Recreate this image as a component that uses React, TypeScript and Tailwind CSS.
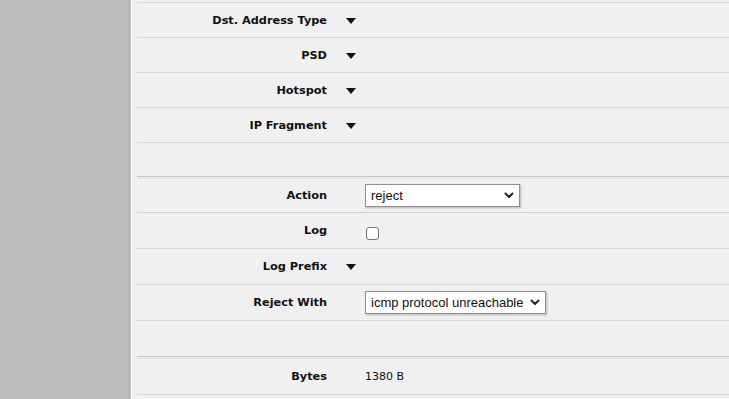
import React from "react";

const Tri = () => (
  <svg width="10" height="6" viewBox="0 0 10 6" className="block">
    <polygon points="0,0 10,0 5,6" fill="#111" />
  </svg>
);

const Chevron = () => (
  <svg width="10" height="7" viewBox="0 0 10 7" className="block">
    <polyline points="1.5,1.5 5,5 8.5,1.5" fill="none" stroke="#222" strokeWidth="2" strokeLinecap="round" strokeLinejoin="round" />
  </svg>
);

const Select = ({ value, w }: { value: string; w: string }) => (
  <div
    className={`flex items-center justify-between gap-[6px] h-[23px] ${w} bg-white border border-[#8f8f8f] shadow-[1px_1px_2px_rgba(0,0,0,0.25)] pl-[5px] pr-[5px] text-[13px] text-[#111]`}
    style={{ fontFamily: "'Liberation Sans', Arial, sans-serif" }}
  >
    <span className="whitespace-nowrap">{value}</span>
    <Chevron />
  </div>
);

type Row = {
  label?: string;
  kind: "tri" | "select" | "check" | "text" | "empty";
  value?: string;
  w?: string;
  cls: string;
};

const rows: Row[] = [
  { label: "Dst. Address Type", kind: "tri", cls: "h-[35px] border-b border-[#d9d9d9]" },
  { label: "PSD", kind: "tri", cls: "h-[35px] border-b border-[#d9d9d9]" },
  { label: "Hotspot", kind: "tri", cls: "h-[35px] border-b border-[#d9d9d9]" },
  { label: "IP Fragment", kind: "tri", cls: "h-[35px] border-b border-[#d9d9d9]" },
  { kind: "empty", cls: "h-[34px] border-b border-[#c4c4c4]" },
  { label: "Action", kind: "select", value: "reject", w: "w-[155px]", cls: "mt-[1px] h-[35px] border-t border-t-[#e2e2e2] border-b border-b-[#d2d2d2]" },
  { label: "Log", kind: "check", cls: "h-[36px] border-b border-[#d9d9d9]" },
  { label: "Log Prefix", kind: "tri", cls: "h-[36px] border-b border-[#d9d9d9]" },
  { label: "Reject With", kind: "select", value: "icmp protocol unreachable", w: "w-[181px]", cls: "h-[36px] border-b border-[#d9d9d9]" },
  { kind: "empty", cls: "h-[36px] border-b border-[#c4c4c4]" },
  { label: "Bytes", kind: "text", value: "1380 B", cls: "mt-[1px] h-[37px] border-t border-t-[#e2e2e2] border-b border-b-[#d9d9d9]" },
];

export default function App() {
  return (
    <div
      className="flex w-[729px] h-[399px] overflow-hidden bg-[#f0f0f0]"
      style={{ fontFamily: "'DejaVu Sans', Verdana, sans-serif" }}
    >
      <div className="w-[128px] shrink-0 bg-[#bdbdbd]" />
      <div className="w-[3px] shrink-0 bg-gradient-to-r from-[#b2b2b2] to-[#c6c6c6]" />
      <div className="w-[1px] shrink-0 bg-[#f8f8f8]" />
      <div className="flex-1 pl-[5px] pt-[2px]">
        <div className="border-t border-[#d9d9d9]" />
        {rows.map((r, i) => (
          <div key={i} className={`flex items-center ${r.cls}`}>
            <div className="w-[190px] pt-[2px] text-right text-[11.3px] font-bold text-[#111] whitespace-nowrap">
              {r.label}
            </div>
            <div className="w-[38px] shrink-0 flex pl-[19px] pt-[1px]">
              {r.kind === "tri" && <Tri />}
            </div>
            <div className="flex items-center">
              {r.kind === "select" && <Select value={r.value!} w={r.w!} />}
              {r.kind === "check" && (
                <div className="w-[13px] h-[13px] ml-[1px] mt-[6px] rounded-[3px] border border-[#767676] bg-white" />
              )}
              {r.kind === "text" && <span className="pt-[2px] text-[11px] text-[#111]">{r.value}</span>}
            </div>
          </div>
        ))}
      </div>
    </div>
  );
}
